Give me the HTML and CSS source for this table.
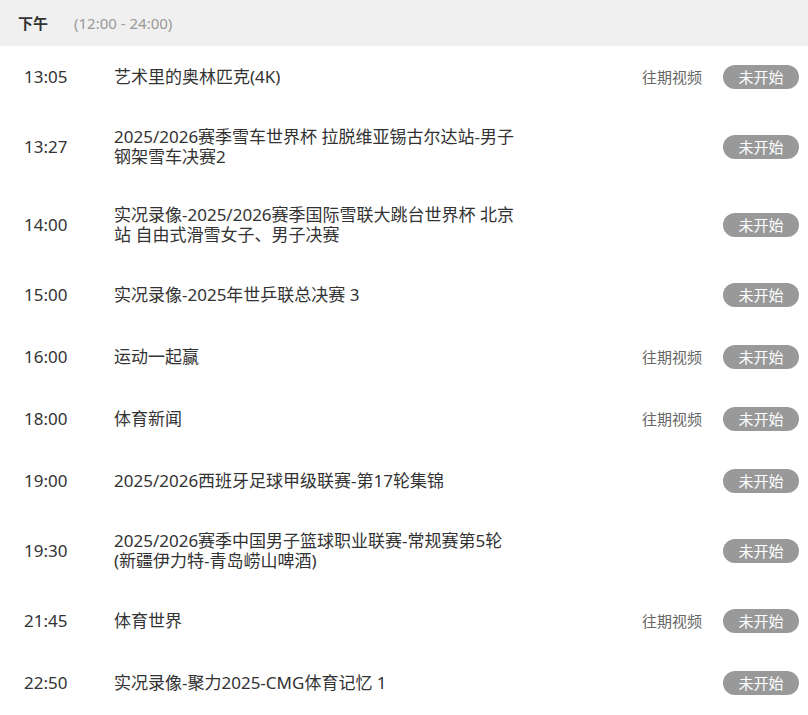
FILE: index.html
```html
<!DOCTYPE html>
<html lang="zh-CN">
<head>
<meta charset="utf-8">
<title>节目单</title>
<link rel="stylesheet" href="styles.css">
</head>
<body>
<div class="schedule">
  <div class="period">
    <span class="period-name">下午</span>
    <span class="period-range">(12:00 - 24:00)</span>
  </div>
  <ul class="list">
    <li class="row">
      <span class="time">13:05</span>
      <span class="title">艺术里的奥林匹克(4K)</span>
      <a class="replay">往期视频</a>
      <span class="status">未开始</span>
    </li>
    <li class="row">
      <span class="time">13:27</span>
      <span class="title">2025/2026赛季雪车世界杯 拉脱维亚锡古尔达站-男子钢架雪车决赛2</span>
      <span class="status">未开始</span>
    </li>
    <li class="row">
      <span class="time">14:00</span>
      <span class="title">实况录像-2025/2026赛季国际雪联大跳台世界杯 北京站 自由式滑雪女子、男子决赛</span>
      <span class="status">未开始</span>
    </li>
    <li class="row">
      <span class="time">15:00</span>
      <span class="title">实况录像-2025年世乒联总决赛 3</span>
      <span class="status">未开始</span>
    </li>
    <li class="row">
      <span class="time">16:00</span>
      <span class="title">运动一起赢</span>
      <a class="replay">往期视频</a>
      <span class="status">未开始</span>
    </li>
    <li class="row">
      <span class="time">18:00</span>
      <span class="title">体育新闻</span>
      <a class="replay">往期视频</a>
      <span class="status">未开始</span>
    </li>
    <li class="row">
      <span class="time">19:00</span>
      <span class="title">2025/2026西班牙足球甲级联赛-第17轮集锦</span>
      <span class="status">未开始</span>
    </li>
    <li class="row">
      <span class="time">19:30</span>
      <span class="title">2025/2026赛季中国男子篮球职业联赛-常规赛第5轮(新疆伊力特-青岛崂山啤酒)</span>
      <span class="status">未开始</span>
    </li>
    <li class="row">
      <span class="time">21:45</span>
      <span class="title">体育世界</span>
      <a class="replay">往期视频</a>
      <span class="status">未开始</span>
    </li>
    <li class="row">
      <span class="time">22:50</span>
      <span class="title">实况录像-聚力2025-CMG体育记忆 1</span>
      <span class="status">未开始</span>
    </li>
  </ul>
</div>
</body>
</html>
```
FILE: styles.css
```css
* { box-sizing: border-box; }
html, body {
  margin: 0;
  padding: 0;
  background: #fff;
}
body {
  font-family: "Noto Sans", "Noto Sans CJK SC", sans-serif;
  color: #333;
}
.schedule {
  width: 808px;
}
.period {
  height: 46px;
  background: #f0f0f0;
  display: flex;
  align-items: center;
  padding-left: 18px;
  font-size: 15px;
  line-height: 20px;
}
.period-name {
  font-weight: bold;
  color: #333;
}
.period-range {
  margin-left: 26px;
  color: #999;
}
.list {
  list-style: none;
  margin: 0;
  padding: 0;
}
.row {
  display: flex;
  align-items: center;
  padding: 19px 9px 19px 24px;
  min-height: 62px;
}
.time {
  width: 90px;
  flex: none;
  font-size: 17px;
  line-height: 20px;
  color: #333;
}
.title {
  width: 405px;
  flex: none;
  font-size: 17px;
  line-height: 20px;
  color: #333;
  margin-right: auto;
}
.replay {
  font-size: 15px;
  line-height: 20px;
  color: #666;
  text-decoration: none;
  margin-right: 21px;
}
.status {
  flex: none;
  width: 76px;
  height: 24px;
  border-radius: 12px;
  background: #999;
  color: #fff;
  font-size: 15px;
  line-height: 24px;
  text-align: center;
}
```
